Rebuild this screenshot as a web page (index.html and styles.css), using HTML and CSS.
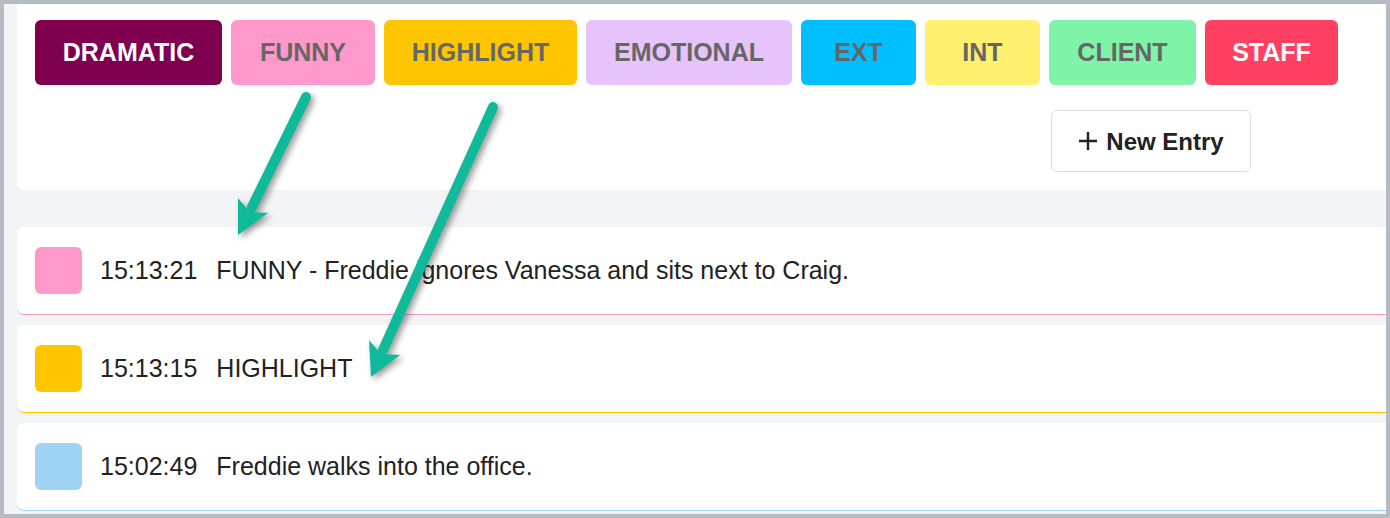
FILE: index.html
```html
<!DOCTYPE html>
<html lang="en">
<head>
    <meta charset="UTF-8">
    <meta name="viewport" content="width=device-width, initial-scale=1.0">
    <title>Log</title>
    <link rel="stylesheet" href="styles.css">
</head>
<body>
    <div class="frame">
        <!-- Categorias y boton nuevo -->
        <div class="card">
            <div class="tags">
                <button class="tag dramatic">DRAMATIC</button>
                <button class="tag funny">FUNNY</button>
                <button class="tag highlight">HIGHLIGHT</button>
                <button class="tag emotional">EMOTIONAL</button>
                <button class="tag ext">EXT</button>
                <button class="tag int">INT</button>
                <button class="tag client">CLIENT</button>
                <button class="tag staff">STAFF</button>
            </div>
            <div class="actions">
                <button class="new-entry">
                    <svg width="20" height="20" viewBox="0 0 20 20"><path d="M10 1v18M1 10h18" stroke="#222" stroke-width="2.4" fill="none"/></svg>
                    New Entry
                </button>
            </div>
        </div>

        <!-- Entradas -->
        <div class="entries">
            <div class="entry funny-line">
                <span class="swatch funny"></span>
                <span class="time">15:13:21</span>
                <span class="text">FUNNY - Freddie ignores Vanessa and sits next to Craig.</span>
            </div>
            <div class="entry highlight-line">
                <span class="swatch highlight"></span>
                <span class="time">15:13:15</span>
                <span class="text">HIGHLIGHT</span>
            </div>
            <div class="entry plain-line">
                <span class="swatch plain"></span>
                <span class="time">15:02:49</span>
                <span class="text">Freddie walks into the office.</span>
            </div>
        </div>

        <!-- flechas de anotacion -->
        <svg class="arrows" width="1390" height="518" viewBox="0 0 1390 518">
            <g class="arrow">
                <line x1="306" y1="97" x2="252" y2="207" />
                <polygon points="238,235 238,198 250,212 268,213" />
            </g>
            <g class="arrow">
                <line x1="493" y1="107" x2="383" y2="350" />
                <polygon points="371,377 369,340 381,354 400,355" />
            </g>
        </svg>
    </div>
</body>
</html>
```

FILE: styles.css
```css
/* Estilos generales */
body {
    margin: 0;
    padding: 0;
    font-family: "Liberation Sans", Arial, sans-serif;
    color: #222;
}

.frame {
    position: relative;
    box-sizing: border-box;
    width: 1390px;
    height: 518px;
    border: 4px solid #b4bbc2;
    background-color: #f3f4f6;
    padding-left: 13px;
    overflow: hidden;
}

/* Tarjeta superior */
.card {
    background-color: #fff;
    border-radius: 0 0 0 7px;
    padding: 16px 0 18px 18px;
}

.tags {
    display: flex;
    gap: 9px;
}

.tag {
    height: 65px;
    padding: 0;
    border: none;
    border-radius: 6px;
    font-family: "Liberation Sans", Arial, sans-serif;
    font-size: 25px;
    font-weight: bold;
    color: #666;
    cursor: pointer;
}

.tag.dramatic { width: 187px; background-color: #800050; color: #fff; }
.tag.funny { width: 144px; }
.tag.highlight { width: 193px; }
.tag.emotional { width: 206px; }
.tag.ext { width: 115px; }
.tag.int { width: 115px; }
.tag.client { width: 147px; }
.tag.staff { width: 133px; color: #fff; }

.funny { background-color: #ff99cc; }
.highlight { background-color: #ffc600; }
.emotional { background-color: #e6c3fa; }
.ext { background-color: #00bfff; }
.int { background-color: #fff06f; }
.client { background-color: #7ff4a8; }
.staff { background-color: #ff4062; }
.plain { background-color: #9fd4f5; }

.actions {
    display: flex;
    padding-left: 1016px;
    margin-top: 25px;
}

.new-entry {
    display: flex;
    align-items: center;
    gap: 8px;
    width: 200px;
    height: 62px;
    padding-top: 3px;
    justify-content: center;
    background-color: #fff;
    border: 1px solid #ddd;
    border-radius: 6px;
    font-family: "Liberation Sans", Arial, sans-serif;
    font-size: 24px;
    font-weight: bold;
    color: #222;
    cursor: pointer;
}

.new-entry svg {
    margin-top: -3px;
}

/* Lista de entradas */
.entries {
    display: flex;
    flex-direction: column;
    gap: 10px;
    margin-top: 37px;
}

.entry {
    box-sizing: border-box;
    height: 88px;
    display: flex;
    align-items: center;
    padding-left: 18px;
    background-color: #fff;
    border-bottom: 1px solid;
    border-radius: 7px 0 0 7px;
    font-size: 25px;
}

.funny-line { border-color: #f39cc6; }
.highlight-line { border-color: #ffc600; }
.plain-line { border-color: #a3d2f2; }

.swatch {
    width: 47px;
    height: 47px;
    border-radius: 6px;
    margin-right: 18px;
}

.time {
    margin-right: 19px;
}

/* Flechas */
.arrows {
    position: absolute;
    left: -4px;
    top: -4px;
    pointer-events: none;
}

.arrow {
    filter: drop-shadow(3px 3px 3px rgba(0, 0, 0, 0.4));
}

.arrow line {
    stroke: #0fba9b;
    stroke-width: 10;
    stroke-linecap: round;
}

.arrow polygon {
    fill: #0fba9b;
}
```
